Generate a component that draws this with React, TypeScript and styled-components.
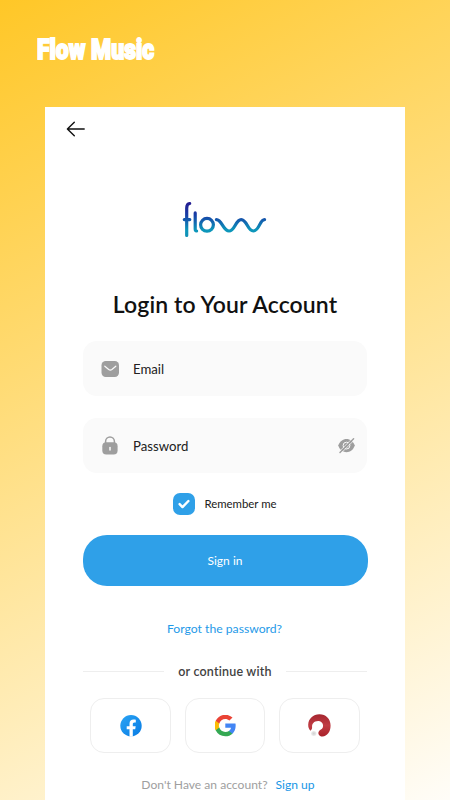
import React from "react";
import styled, { createGlobalStyle } from "styled-components";

const GlobalStyle = createGlobalStyle`
  * { box-sizing: border-box; }
  body { margin: 0; overflow: hidden; }
  button { display: flex; align-items: center; justify-content: center; border: 0; padding: 0; background: none; font: inherit; color: inherit; cursor: pointer; }
  svg { display: block; flex: none; }
`;

const Page = styled.main`
  display: flex;
  flex-direction: column;
  width: 450px;
  height: 800px;
  overflow: hidden;
  background: linear-gradient(152deg, #ffc727 0%, #fffdf8 100%);
  font-family: Lato, "Open Sans", sans-serif;
`;

const Brand = styled.h1`
  flex: none;
  height: 107px;
  margin: 0;
  padding: 30px 0 0 37px;
  color: #fff;
  font: 900 28.5px/40px Roboto, sans-serif;
  white-space: nowrap;
  -webkit-text-stroke: 1.9px #fff;
  transform: scaleX(0.805);
  transform-origin: 37px 0;
`;

const Screen = styled.section`
  display: flex;
  flex: 1;
  flex-direction: column;
  align-items: center;
  width: 360px;
  margin-left: 45px;
  background: #fff;
`;

const Header = styled.header`
  display: flex;
  align-items: center;
  align-self: stretch;
  height: 44px;
  padding-left: 21px;
`;

const Logo = styled.svg`
  margin: 49px 2px 0 0;
`;

const Label = styled.span<{ $size: number; $spacing?: number; $weight?: number; $color?: string }>`
  color: ${(p) => p.$color ?? "#212121"};
  font-size: ${(p) => p.$size}px;
  font-weight: ${(p) => p.$weight ?? 400};
  letter-spacing: ${(p) => p.$spacing ?? 0}px;
  line-height: 20px;
  white-space: nowrap;
`;

const Heading = styled.h2`
  margin: 48px 0 0;
  color: #111;
  font-size: 23px;
  font-weight: 600;
  line-height: 32px;
  letter-spacing: 0.1px;
  white-space: nowrap;
`;

const Field = styled.label<{ $top: number }>`
  display: flex;
  align-items: center;
  width: 284px;
  height: 55px;
  margin-top: ${(p) => p.$top}px;
  padding: 0 12px 0 18px;
  border-radius: 14px;
  background: #fafafa;

  ${Label} { flex: 1; margin-left: 14px; }
`;

const Remember = styled.div`
  display: flex;
  align-items: center;
  gap: 9px;
  height: 22px;
  margin-top: 20px;
`;

const Checkbox = styled.span`
  display: grid;
  place-items: center;
  width: 22px;
  height: 22px;
  border-radius: 7px;
  background: #2fa0e8;
`;

const SignIn = styled.button`
  width: 285px;
  height: 51px;
  margin-top: 20px;
  border-radius: 24px;
  background: #2fa0e8;
`;

const Forgot = styled.button`
  height: 20px;
  margin: 33px 1px 0 0;
`;

const Divider = styled.div`
  display: flex;
  align-items: center;
  justify-content: space-between;
  width: 284px;
  height: 20px;
  margin-top: 22px;

  ${Label} { padding-top: 2px; }
`;

const Rule = styled.span`
  width: 81px;
  height: 1px;
  background: #eeeeee;
`;

const Socials = styled.div`
  display: flex;
  gap: 14px;
  margin-top: 17px;
`;

const Social = styled.button`
  width: 80.5px;
  height: 55px;
  border: 1px solid #eeeeee;
  border-radius: 14px;
`;

const Footer = styled.footer`
  display: flex;
  gap: 8px;
  height: 20px;
  margin: 22px 0 0 6px;
`;

export default function App() {
  return (
    <>
      <GlobalStyle />
      <Page>
        <Brand>Flow Music</Brand>
        <Screen>
          <Header>
            <button aria-label="Back">
              <svg width="20" height="16" viewBox="0 0 20 16" fill="none" stroke="#111" strokeWidth="1.4" strokeLinecap="round" strokeLinejoin="round">
                <path d="M18.2 8H1.6M8.3 1.2L1.4 8l6.9 6.8" />
              </svg>
            </button>
          </Header>

          <Logo width="86" height="40" viewBox="0 0 86 40" fill="none" strokeLinecap="round" strokeWidth="3.2" stroke="url(#flow)">
            <defs>
              <linearGradient id="flow" x1="0" y1="2" x2="0" y2="37" gradientUnits="userSpaceOnUse">
                <stop offset="0" stopColor="#251a90" />
                <stop offset="0.38" stopColor="#173fa6" />
                <stop offset="0.8" stopColor="#0c97bb" />
                <stop offset="1" stopColor="#1290b5" />
              </linearGradient>
            </defs>
            <path d="M5.7 35.4V8.2C5.7 5 7 3.7 8.7 3.5M3.3 19.6H8.8" />
            <path d="M14.2 12.9V29C14.2 30.5 14.7 30.9 15.6 31" />
            <circle cx="26" cy="24.8" r="6.4" />
            <path d="M35.4 19.6C41 19.6 42 31 48 31C54 31 54.5 19.6 60.2 19.6C66 19.6 66.5 31 72.3 31C78.5 31 78.5 19.6 83.6 19.6" />
          </Logo>

          <Heading>Login to Your Account</Heading>

          <Field $top={21}>
            <svg width="18" height="16" viewBox="0 0 18 16">
              <rect x="0.5" width="17.5" height="16" rx="4.2" fill="#9e9e9e" />
              <path d="M3.8 5.2L7.7 8.5Q9.3 9.7 10.9 8.5L14.8 5.2" fill="none" stroke="#fafafa" strokeWidth="1.2" strokeLinecap="round" />
            </svg>
            <Label $size={13.2}>Email</Label>
          </Field>

          <Field $top={22}>
            <svg width="18" height="20" viewBox="0 0 18 20">
              <path d="M4.6 8V5.4a4.4 4.4 0 0 1 8.8 0V8" fill="none" stroke="#9e9e9e" strokeWidth="1.5" />
              <rect x="1.3" y="6.2" width="15.3" height="12.4" rx="4" fill="#9e9e9e" />
              <path d="M9 11.4v2.6" stroke="#fafafa" strokeWidth="1.5" strokeLinecap="round" />
            </svg>
            <Label $size={13.2}>Password</Label>
            <svg width="17" height="16" viewBox="0 0 17 16">
              <path d="M.2 7.6C1.8 3 5 .9 8.5 .9S15.2 3 16.8 7.6C15.2 12.2 12 14.3 8.5 14.3S1.8 12.2 .2 7.6z" fill="#9e9e9e" />
              <circle cx="8.5" cy="7.6" r="3.4" fill="none" stroke="#fafafa" strokeWidth="1" />
              <path d="M1.2 13.7L14.5.2M2.9 15.4L16.2 2.1" stroke="#fafafa" strokeWidth="0.8" />
              <path d="M2 14.6L15.6.8" stroke="#9e9e9e" strokeWidth="1.4" strokeLinecap="round" />
            </svg>
          </Field>

          <Remember>
            <Checkbox>
              <svg width="12" height="10" viewBox="0 0 12 10" fill="none" stroke="#fff" strokeWidth="2.4" strokeLinecap="round" strokeLinejoin="round">
                <path d="M1.6 5.1L4.5 8.1L10.4 2" />
              </svg>
            </Checkbox>
            <Label $size={11.4}>Remember me</Label>
          </Remember>

          <SignIn><Label $size={12} $color="#fff">Sign in</Label></SignIn>
          <Forgot><Label $size={12.2} $color="#1f9ae8">Forgot the password?</Label></Forgot>

          <Divider>
            <Rule />
            <Label $size={12.5} $spacing={0.2} $weight={600} $color="#424242">or continue with</Label>
            <Rule />
          </Divider>

          <Socials>
            <Social aria-label="Facebook">
              <svg width="22" height="22" viewBox="0 0 22 22">
                <defs>
                  <linearGradient id="fb" x1="0" y1="0" x2="1" y2="1">
                    <stop offset="0" stopColor="#2aa4f4" />
                    <stop offset="1" stopColor="#087be4" />
                  </linearGradient>
                </defs>
                <circle cx="11" cy="10.8" r="10.7" fill="url(#fb)" />
                <path d="M9.5 21.7v-7.4H6.7v-3.1h2.8V8.8c0-2.8 1.6-4.2 4-4.2 1.1 0 2.3.2 2.3.2v2.6h-1.3c-1.3 0-1.7.8-1.7 1.6v2.2h2.9l-.5 3.1h-2.4v7.4z" fill="#fff" />
              </svg>
            </Social>
            <Social aria-label="Google">
              <svg width="21" height="22" viewBox="1.5 1.5 21.4 22">
                <path d="M22.56 12.25c0-.78-.07-1.53-.2-2.25H12v4.26h5.92a5.06 5.06 0 0 1-2.2 3.32v2.77h3.57c2.08-1.92 3.27-4.74 3.27-8.1z" fill="#4285f4" />
                <path d="M12 23c2.97 0 5.46-.98 7.28-2.66l-3.57-2.77c-.98.66-2.23 1.06-3.71 1.06-2.86 0-5.29-1.93-6.16-4.53H2.18v2.84A11 11 0 0 0 12 23z" fill="#34a853" />
                <path d="M5.84 14.09a6.6 6.6 0 0 1 0-4.18V7.07H2.18a11 11 0 0 0 0 9.86z" fill="#fbbc05" />
                <path d="M12 5.38c1.62 0 3.06.56 4.21 1.64l3.15-3.15A11 11 0 0 0 2.18 7.07l3.66 2.84C6.71 7.31 9.14 5.38 12 5.38z" fill="#ea4335" />
              </svg>
            </Social>
            <Social aria-label="Music account">
              <svg width="24" height="24" viewBox="0.5 0.5 24 24">
                <defs>
                  <linearGradient id="red" x1="0" y1="0" x2="0" y2="1">
                    <stop offset="0" stopColor="#a52630" />
                    <stop offset="0.5" stopColor="#c03c43" />
                    <stop offset="1" stopColor="#a92129" />
                  </linearGradient>
                  <radialGradient id="dot">
                    <stop offset="0" stopColor="#cfcfcf" />
                    <stop offset="1" stopColor="#ededed" />
                  </radialGradient>
                </defs>
                <path d="M2.9 17.2C1.2 15.2.6 13.4.7 11C1.1 5.1 5.6.8 11.9.8C18.4.8 23.1 5.6 23.1 12C23.1 18.4 19.6 22.8 15 22.9C11.8 23 10 20.2 11.3 17.9C12.3 16.1 14.6 16 15.3 14C16.3 11.2 14.6 7.7 11.1 7.5C6.5 7.3 4.3 10.4 4.6 13.6C4.7 15.2 4 16.5 2.9 17.2z" fill="url(#red)" />
                <ellipse cx="6.3" cy="20" rx="2.7" ry="2.5" fill="url(#dot)" />
              </svg>
            </Social>
          </Socials>

          <Footer>
            <Label $size={12.1} $color="#9e9e9e">Don't Have an account?</Label>
            <button><Label $size={12.1} $color="#1796e6">Sign up</Label></button>
          </Footer>
        </Screen>
      </Page>
    </>
  );
}
